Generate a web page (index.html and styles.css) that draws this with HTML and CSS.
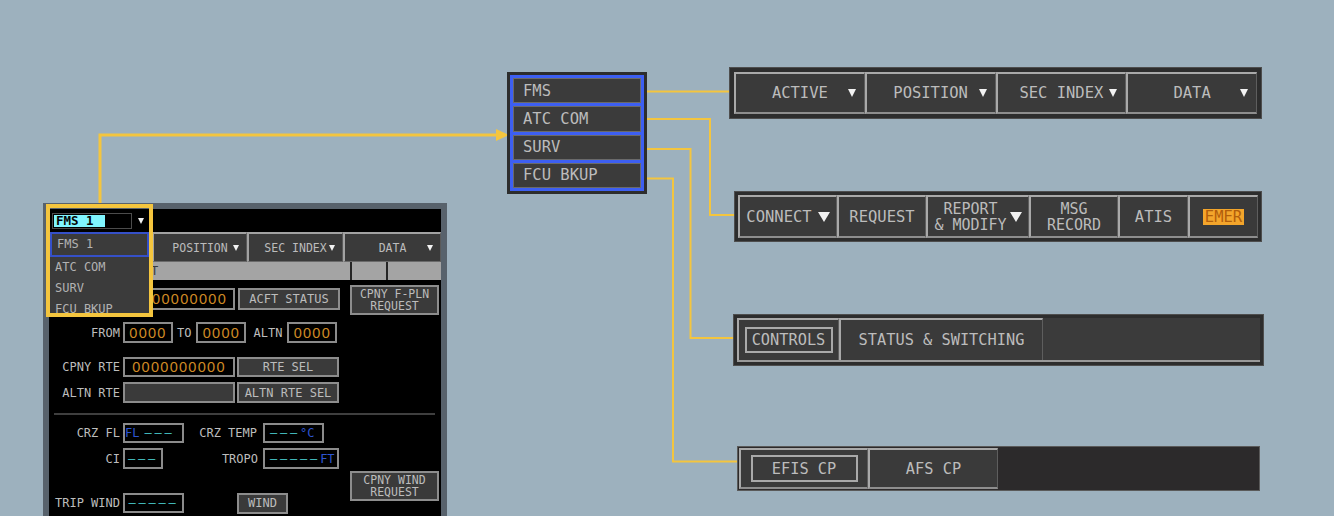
FILE: index.html
```html
<!DOCTYPE html>
<html>
<head>
<meta charset="utf-8">
<title>MFD ATC COM navigation</title>
<link rel="stylesheet" href="styles.css">
</head>
<body>
<div class="canvas">

  <svg class="wires" width="1334" height="516" viewBox="0 0 1334 516">
    <polyline class="wire thick" points="100,206 100,135 498,135"/>
    <polygon class="tip" points="496,129 509,135 496,141"/>
    <polyline class="wire" points="640,91.5 736,91.5"/>
    <polyline class="wire" points="640,119 710,119 710,215 740,215"/>
    <polyline class="wire" points="640,149 690.5,149 690.5,338 740,338"/>
    <polyline class="wire" points="640,178.5 673,178.5 673,461.5 742,461.5"/>
  </svg>

  <!-- FMS page with the system selector open -->
  <div class="panel">
    <div class="phead">
      <div class="combo"><span class="combo-val">FMS 1</span></div>
      <i class="arr sm"></i>
    </div>
    <div class="ptabs">
      <div class="ptab pt1"></div>
      <div class="ptab pt2"><span class="lbl">POSITION</span><i class="arr sm"></i></div>
      <div class="ptab pt3"><span class="lbl">SEC INDEX</span><i class="arr sm"></i></div>
      <div class="ptab pt4"><span class="lbl">DATA</span><i class="arr sm"></i></div>
    </div>
    <div class="pgray">
      <div class="gcell g1">T</div>
      <div class="gcell g2"></div>
      <div class="gcell g3"></div>
    </div>
    <div class="pbody">
      <div class="sect">
        <div class="lcol">
          <div class="row ra">
            <span class="lab"></span>
            <span class="fld amber w112 end">00000000</span>
            <span class="btn w102 ml3">ACFT STATUS</span>
          </div>
          <div class="row rb">
            <span class="lab">FROM</span>
            <span class="fld amber w50">0000</span>
            <span class="lab-in to">TO</span>
            <span class="fld amber w50">0000</span>
            <span class="lab-in altn">ALTN</span>
            <span class="fld amber w50">0000</span>
          </div>
          <div class="row rc">
            <span class="lab">CPNY RTE</span>
            <span class="fld amber w112">0000000000</span>
            <span class="btn w102 ml2">RTE SEL</span>
          </div>
          <div class="row rd">
            <span class="lab">ALTN RTE</span>
            <span class="fld grey w112"></span>
            <span class="btn w102 ml2">ALTN RTE SEL</span>
          </div>
        </div>
        <div class="rcol">
          <div class="btn two req1">CPNY F-PLN<br>REQUEST</div>
        </div>
      </div>
      <div class="sep"></div>
      <div class="sect">
        <div class="lcol">
          <div class="row re">
            <span class="lab">CRZ FL</span>
            <span class="fld w61 start"><span class="blue">FL</span><span class="dash d1">–––</span></span>
            <span class="lab2 w79">CRZ TEMP</span>
            <span class="fld w61 start pl5"><span class="dash">–––</span><span class="blue">°C</span></span>
          </div>
          <div class="row rf">
            <span class="lab">CI</span>
            <span class="fld w40"><span class="dash">–––</span></span>
            <span class="lab2 w100">TROPO</span>
            <span class="fld w76 start pl5"><span class="dash">–––––</span><span class="blue">FT</span></span>
          </div>
          <div class="row rh">
            <span class="lab">TRIP WIND</span>
            <span class="fld w61"><span class="dash">–––––</span></span>
            <span class="btn w51 wind">WIND</span>
          </div>
        </div>
        <div class="rcol">
          <div class="btn two req2">CPNY WIND<br>REQUEST</div>
        </div>
      </div>
    </div>

    <ul class="drop">
      <li class="on">FMS 1</li>
      <li>ATC COM</li>
      <li>SURV</li>
      <li>FCU BKUP</li>
    </ul>
  </div>
  <div class="mark"></div>

  <!-- system menu -->
  <div class="menu">
    <div class="menu-list">
      <div class="menu-item">FMS</div>
      <div class="menu-item">ATC COM</div>
      <div class="menu-item">SURV</div>
      <div class="menu-item">FCU BKUP</div>
    </div>
  </div>

  <!-- FMS tabs -->
  <div class="bar bar-fms">
    <div class="tab dd"><span class="lbl">ACTIVE</span><i class="arr"></i></div>
    <div class="tab dd"><span class="lbl">POSITION</span><i class="arr"></i></div>
    <div class="tab dd"><span class="lbl">SEC INDEX</span><i class="arr"></i></div>
    <div class="tab dd"><span class="lbl">DATA</span><i class="arr"></i></div>
  </div>

  <!-- ATC COM tabs -->
  <div class="bar bar-atc">
    <div class="tab t99 gap6"><span>CONNECT</span><i class="arr lg"></i></div>
    <div class="tab t89">REQUEST</div>
    <div class="tab t103 gap3"><span class="two">REPORT<br>&amp; MODIFY</span><i class="arr lg"></i></div>
    <div class="tab t89"><span class="two">MSG<br>RECORD</span></div>
    <div class="tab t70">ATIS</div>
    <div class="tab t70"><span class="emer">EMER</span></div>
  </div>

  <!-- SURV tabs -->
  <div class="bar bar-surv">
    <div class="strip">
      <div class="tab t102"><span class="sel w88">CONTROLS</span></div>
      <div class="tab t204">STATUS &amp; SWITCHING</div>
    </div>
  </div>

  <!-- FCU BKUP tabs -->
  <div class="bar bar-fcu">
    <div class="tab t129"><span class="sel w107">EFIS CP</span></div>
    <div class="tab t130">AFS CP</div>
  </div>

</div>
</body>
</html>
```

FILE: styles.css
```css
*{box-sizing:border-box;}

body{margin:0;background-color:#9db1be;font-family:"DejaVu Sans Mono","Liberation Mono",monospace;color:#bcbcbc;}

.canvas{position:relative;width:1334px;height:516px;overflow:hidden;}

/* connectors */
.wires{position:absolute;left:0;top:0;z-index:1;}
.wire{fill:none;stroke:#f4c53e;stroke-width:2;}
.wire.thick{stroke-width:3;}
.tip{fill:#f4c53e;}

/* arrows */
.arr{display:block;width:0;height:0;border-left:4.5px solid transparent;border-right:4.5px solid transparent;border-top:8px solid #f2f2f2;}
.arr.sm{border-left-width:3.5px;border-right-width:3.5px;border-top-width:6px;}
.arr.lg{border-left-width:6.5px;border-right-width:6.5px;border-top-width:10px;}

/* left FMS page */
.panel{position:absolute;left:43px;top:203px;width:404px;height:340px;border:6px solid #58626c;background:#000;z-index:2;}

.phead{height:23px;display:flex;align-items:center;gap:6px;padding-left:3px;}
.combo{width:80px;height:16px;border:1px solid #4c4c4c;padding:1px;display:flex;}
.combo-val{width:51px;background:#80f6ff;color:#050505;font-size:12.5px;font-weight:bold;line-height:12px;padding-left:2px;}

.ptabs{display:flex;height:30px;}
.ptab{display:grid;grid-template-columns:1fr auto 1fr;align-items:center;background:#3a3a3a;border-top:2px solid #a2a2a2;border-left:2px solid #a2a2a2;border-bottom:1px solid #6a6a6a;border-right:1px solid #5a5a5a;font-size:11.5px;}
.ptab .lbl{grid-column:2;}
.ptab .arr{grid-column:3;justify-self:end;margin-right:7px;}
.pt1{width:103px;}
.pt2{width:95px;}
.pt3{width:96px;}
.pt4{width:98px;}

.pgray{display:flex;height:18px;background:#a4a4a4;color:#3a3a3a;font-size:12px;line-height:18px;}
.gcell{height:100%;border-right:2px solid #262626;}
.g1{width:303px;padding-left:102px;}
.g2{width:36px;}
.g3{flex:1;border-right:none;}

.pbody{padding-left:5px;font-size:12px;}
.sect{display:flex;gap:10px;}
.lcol{width:286px;}
.rcol{width:89px;}

.row{display:flex;align-items:center;}
.ra{margin-top:8px;height:22px;}
.rb{margin-top:12px;height:21px;}
.rc{margin-top:14px;height:20px;}
.rd{margin-top:5px;height:21px;}
.re{margin-top:8px;height:20px;}
.rf{margin-top:5px;height:21px;}
.rh{margin-top:24px;height:20px;}

.lab{width:66px;margin-right:3px;text-align:right;white-space:nowrap;color:#bdbdbd;}
.lab-in{color:#bdbdbd;}
.to{padding:0 5px 0 4px;}
.altn{padding:0 5px 0 7px;}
.lab2{text-align:right;padding-right:6px;white-space:nowrap;color:#bdbdbd;}
.w79{width:79px;}
.w100{width:100px;padding-right:5px;}

.fld{height:100%;border:2px solid #8b8b8b;background:#000;display:flex;align-items:center;justify-content:center;white-space:nowrap;}
.fld.start{justify-content:flex-start;}
.fld.end{justify-content:flex-end;padding-right:6px;}
.pl5{padding-left:5px;}
.amber{color:#cf8a25;font-family:"Liberation Sans",sans-serif;font-size:14.5px;letter-spacing:1.3px;}
.grey{background:#3a3a3a;}
.w112{width:112px;}
.w50{width:50px;}
.w61{width:61px;}
.w40{width:40px;}
.w76{width:76px;}
.w102{width:102px;}
.w51{width:51px;}
.ml2{margin-left:2px;}
.ml3{margin-left:3px;}

.blue{color:#2d55d2;}
.dash{color:#45c3c6;letter-spacing:2.8px;}
.d1{margin-left:5px;}

.btn{height:100%;display:flex;align-items:center;justify-content:center;background:#3a3a3a;border:2px solid #8d8d8d;color:#bcbcbc;font-size:12px;text-align:center;white-space:nowrap;}
.btn.two{height:30px;font-size:11.5px;line-height:12px;}
.req1{margin-top:5px;}
.req2{margin-top:56px;}
.wind{margin-left:53px;height:21px;}

.sep{margin:10px 6px 0 0;height:2px;background:#3f3f3f;}

.drop{position:absolute;left:1px;top:23px;width:99px;height:84px;margin:0;padding:0;list-style:none;background:#3b3b3b;overflow:hidden;z-index:3;font-size:12px;color:#b2b2b2;}
.drop li{height:21px;line-height:21px;padding-left:5px;}
.drop li.on{height:25px;line-height:21px;border:2px solid #3550c8;}

.mark{position:absolute;left:46px;top:204px;width:107px;height:113px;border:4px solid #f4c53e;z-index:4;}

/* system menu */
.menu{position:absolute;left:507px;top:72px;width:140px;height:122px;background:#2d2d2d;padding:3px;z-index:2;}
.menu-list{height:100%;display:flex;flex-direction:column;gap:3px;background:#3d5ff2;border:3px solid #3d5ff2;}
.menu-item{flex:1;display:flex;align-items:center;padding-left:9px;background:#3b3b3b;border:1px solid #6a6a6a;font-size:15.5px;color:#bcbcbc;}

/* tab bars */
.bar{position:absolute;z-index:2;display:flex;background:#2d2d2d;border:1px solid #4e4e4e;font-size:15.5px;}
.bar-fms{left:729px;top:67px;width:533px;height:52px;padding:4px;}
.bar-atc{left:734px;top:191px;width:528px;height:51px;padding:3px;}
.bar-surv{left:733px;top:314px;width:531px;height:52px;padding:3px;font-size:15.3px;}
.bar-fcu{left:737px;top:446px;width:523px;height:45px;padding:1px;background:#2c2a2b;border-color:#5a5a5a;font-size:15.3px;}

.tab{display:flex;align-items:center;justify-content:center;background:#3a3a3a;border-top:2px solid #a9a9a9;border-left:2px solid #a9a9a9;border-bottom:2px solid #8e8e8e;border-right:1px solid #5e5e5e;white-space:nowrap;}
.tab.dd{flex:1;display:grid;grid-template-columns:1fr auto 1fr;}
.tab.dd .lbl{grid-column:2;}
.tab.dd .arr{grid-column:3;justify-self:end;margin-right:8px;}
.gap6{gap:6px;}
.gap3{gap:3px;}
.two{font-size:15px;line-height:16px;text-align:center;}
.emer{background:#f3a52b;color:#b25e0b;padding:0 2px;line-height:16px;}

.t99{width:99px;}
.t89{width:89px;}
.t103{width:103px;}
.t70{width:70px;}
.t102{width:102px;}
.t204{width:204px;}
.t129{width:129px;}
.t130{width:130px;}

.strip{flex:1;display:flex;background:#3b3b3b;border-bottom:2px solid #9a9a9a;}
.strip .tab{border-bottom:none;}

.sel{height:26.5px;display:flex;align-items:center;justify-content:center;border:2px solid #a9a9a9;}
.w88{width:88px;}
.w107{width:107px;}
```
